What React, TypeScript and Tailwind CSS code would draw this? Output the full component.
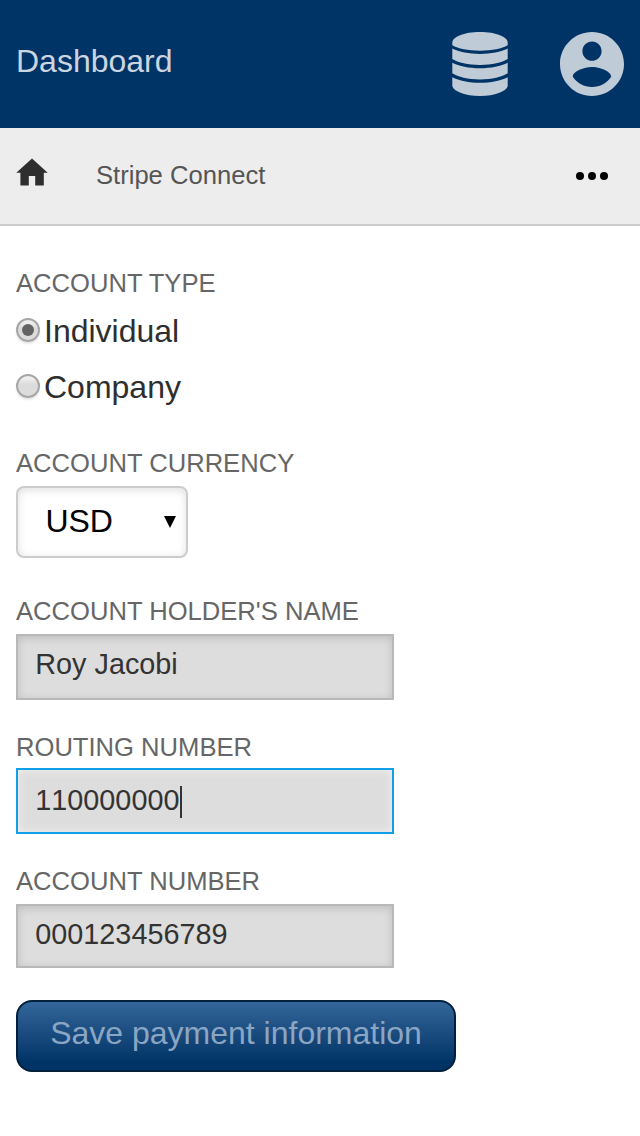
import type { ReactNode } from "react";

function DatabaseIcon() {
  return (
    <svg viewBox="0 0 56 64" className="h-16 w-14" fill="#bfccd8">
      <path d="M.3 10.600C.3 5 12 0 28 0s27.700 5 27.700 10.600v2.700C50 16.700 40 18.700 28 18.700S6 16.700.3 13.300z" />
      <path d="M.3 16.600C7 20 17 21.900 28 21.900s21-1.900 27.700-5.300v10.400C50 30.600 40 32.900 28 32.900S6 30.600.3 27z" />
      <path d="M.3 30.800C7 34.200 17 36.300 28 36.300s21-2.100 27.700-5.500v10.500C50 45 40 47.500 28 47.500S6 45 .3 41.300z" />
      <path d="M.3 45.200C7 48.700 17 50.700 28 50.700s21-2 27.700-5.500v9.100C54 59.500 43 64 28 64S2 59.500.3 54.300z" />
    </svg>
  );
}

function AccountIcon() {
  return (
    <svg viewBox="2 2 20 20" className="size-16" fill="#bfccd8">
      <path d="M12 2C6.480 2 2 6.480 2 12s4.480 10 10 10 10-4.480 10-10S17.520 2 12 2zm0 3c1.660 0 3 1.340 3 3s-1.340 3-3 3-3-1.340-3-3 1.340-3 3-3zm0 14.200c-2.500 0-4.710-1.280-6-3.220.030-1.990 4-3.080 6-3.080 1.990 0 5.970 1.090 6 3.080-1.290 1.940-3.500 3.220-6 3.220z" />
    </svg>
  );
}

function HomeIcon() {
  return (
    <svg viewBox="0 0 32 28" className="h-7 w-8" fill="#2e2e2e">
      <path d="M16 .5 31.700 14.800H27.800V27.500H19.200V18H12.800V27.500H4.400V14.800H.3z" />
    </svg>
  );
}

function Label({ children }: { children: ReactNode }) {
  return <div className="h-8 text-[25.600px] leading-8 text-[#666]">{children}</div>;
}

function Radio({ label, checked = false }: { label: string; checked?: boolean }) {
  return (
    <div className="flex h-10 items-start">
      <span className="mt-[7px] mr-1 flex size-6 items-center justify-center rounded-full border-2 border-[#a6a6a6] bg-linear-to-b from-[#eee] from-15% to-[#dcdcdc] to-40% shadow-[0_2px_2px_rgba(0,0,0,0.09)]">
        {checked && <span className="size-3 rounded-full bg-[#636363]" />}
      </span>
      <span className="text-[32px] leading-10 text-[#2e2e2e]">{label}</span>
    </div>
  );
}

export default function App() {
  return (
    <div className="h-[1136px] w-[640px] overflow-hidden bg-white font-['Liberation_Sans',Arial,sans-serif]">
      <header className="flex h-32 items-center justify-between bg-[#003366] px-4">
        <h1 className="mb-1.5 text-[32px] leading-10 text-[#ccd6e0]">Dashboard</h1>
        <div className="flex gap-[52px]">
          <DatabaseIcon />
          <AccountIcon />
        </div>
      </header>

      <nav className="flex h-[98px] items-start border-b-2 border-[#ccc] bg-[#ededed] px-4">
        <div className="mt-[30px]">
          <HomeIcon />
        </div>
        <span className="mt-[31px] ml-12 text-[25.600px] leading-8 text-[#555]">Stripe Connect</span>
        <div className="mt-11 mr-4 ml-auto flex gap-1">
          <span className="size-2 rounded-full bg-black" />
          <span className="size-2 rounded-full bg-black" />
          <span className="size-2 rounded-full bg-black" />
        </div>
      </nav>

      <main className="px-4 pt-[41px]">
        <Label>ACCOUNT TYPE</Label>
        <div className="mt-3 flex flex-col gap-4">
          <Radio label="Individual" checked />
          <Radio label="Company" />
        </div>

        <div className="mt-10">
          <Label>ACCOUNT CURRENCY</Label>
          <div className="mt-[7px] flex h-[72px] w-[172px] items-center justify-between rounded-lg border-2 border-[#ccc] pr-[10px] pl-[27.400px] text-[32px] leading-10 text-black shadow-[inset_0_2px_8px_rgba(0,0,0,0.13)]">
            <span className="mb-0.5">USD</span>
            <svg viewBox="0 0 12 12" className="h-3 w-3">
              <path d="M0 0H12L6 12z" />
            </svg>
          </div>
        </div>

        <div className="mt-[37px]">
          <Label>ACCOUNT HOLDER'S NAME</Label>
          <div className="mt-[7px] h-[66px] w-[378px] border-2 border-[#b8b8b8] bg-[#ddd] pt-[10px] pl-[17.300px] text-[28.800px] leading-9 text-[#333] shadow-[inset_0_2px_8px_rgba(0,0,0,0.15)]">
            Roy Jacobi
          </div>
        </div>

        <div className="mt-[31px]">
          <Label>ROUTING NUMBER</Label>
          <div className="mt-[5px] flex h-[66px] w-[378px] items-start border-2 border-[#129fea] bg-[#ddd] pt-[12px] pl-[17.300px] text-[28.800px] leading-9 text-[#333] shadow-[inset_0_0_8px_#f0f2ee]">
            <span className="w-[144.700px] [font-kerning:none]">110000000</span>
            <span className="mt-1 h-8 w-0.5 bg-[#333]" />
          </div>
        </div>

        <div className="mt-[31px]">
          <Label>ACCOUNT NUMBER</Label>
          <div className="mt-[7px] h-16 w-[378px] border-2 border-[#b8b8b8] bg-[#ddd] pt-[10px] pl-[17.300px] text-[28.800px] leading-9 text-[#333] shadow-[inset_0_2px_8px_rgba(0,0,0,0.15)]">
            000123456789
          </div>
        </div>

        <button className="mt-8 block h-[72px] w-[440px] rounded-2xl border-2 border-[#02203c] bg-linear-to-b from-[#336699] to-[#003366] to-90% pb-1.5 text-[32px] leading-10 whitespace-nowrap text-[#8ba6c2]">
          Save payment information
        </button>
      </main>
    </div>
  );
}
